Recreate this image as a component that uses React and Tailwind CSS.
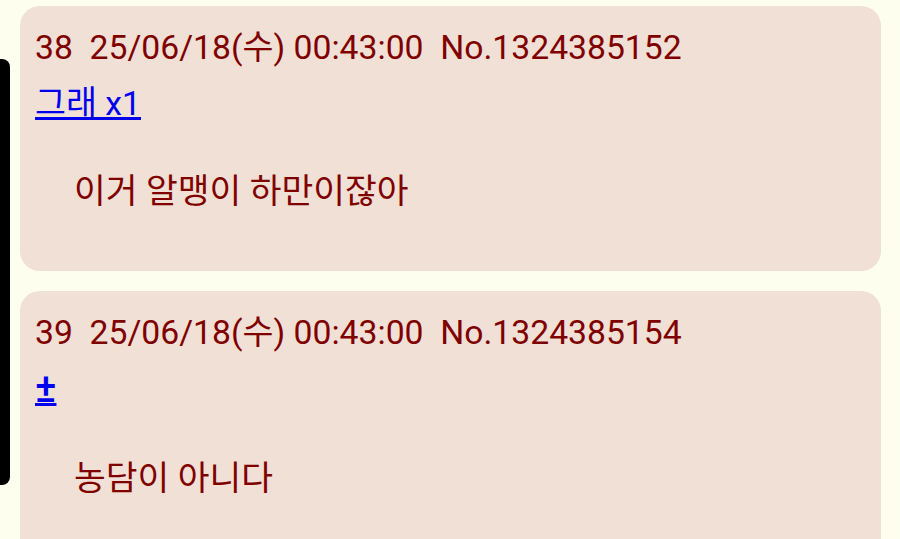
const posts = [
  {
    no: 38,
    date: "25/06/18(수) 00:43:00",
    id: "No.1324385152",
    link: "그래 x1",
    body: "이거 알맹이 하만이잖아",
  },
  {
    no: 39,
    date: "25/06/18(수) 00:43:00",
    id: "No.1324385154",
    link: "±",
    body: "농담이 아니다",
  },
];

const font = { fontFamily: "Roboto, 'Noto Sans CJK KR', sans-serif" };

export default function App() {
  return (
    <div
      className="relative w-[900px] h-[539px] overflow-hidden bg-[#fefeee] pt-[6px] pl-[20px] text-[#800000]"
      style={font}
    >
      {/* side edge overlay */}
      <div className="absolute left-0 top-[59px] w-[10px] h-[426px] bg-black rounded-r-[8px]" />

      <div className="flex flex-col gap-[20px] w-[861px]">
        {posts.map((p) => (
          <div key={p.no} className="bg-[#f0e0d6] rounded-[20px] pt-[14px] pb-[52px] pl-[15px]">
            <div className="text-[33.7px] leading-[56px] whitespace-pre">
              {`${p.no}  ${p.date}  ${p.id}`}
            </div>
            <div className="text-[33.7px] leading-[56px]">
              {p.link === "±" ? (
                <a href="#" className="text-[#0000ee] underline text-[40px] font-medium decoration-[3px] underline-offset-[1px]">
                  ±
                </a>
              ) : (
                <a href="#" className="text-[#0000ee] underline">
                  {p.link}
                </a>
              )}
            </div>
            <div className="text-[34.5px] leading-[56px] mt-[31px] pl-[39px]">{p.body}</div>
          </div>
        ))}
      </div>
    </div>
  );
}
